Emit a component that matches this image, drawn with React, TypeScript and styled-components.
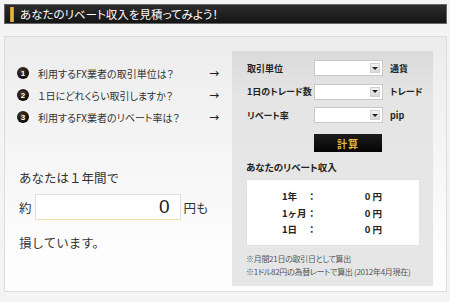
import React from "react";
import styled, { createGlobalStyle } from "styled-components";

const Global = createGlobalStyle`
  html, body { margin: 0; padding: 0; }
  body {
    background: #f4f4f4;
    font-family: "Noto Sans CJK JP", "Noto Sans", sans-serif;
    color: #222;
  }
`;

const Page = styled.div`
  width: 450px;
  height: 302px;
  padding: 4px 3px 0 4px;
  box-sizing: border-box;
`;

const Header = styled.div`
  height: 20px;
  display: flex;
  align-items: center;
  gap: 6px;
  padding-left: 5px;
  background: linear-gradient(#2c2c2c, #151515);
  border: 1px solid #666;
  box-sizing: border-box;
`;

const Stripe = styled.span`
  width: 4px;
  height: 15px;
  background: linear-gradient(90deg, #b88a1c, #f2c44a, #b88a1c);
`;

const Title = styled.h1`
  margin: 0;
  font-size: 11.5px;
  font-weight: normal;
  color: #fff;
  font-feature-settings: "palt";
`;

const Panel = styled.div`
  margin-top: 12px;
  height: 256px;
  border: 1px solid #dcdcdc;
  box-sizing: border-box;
  display: flex;
  background: linear-gradient(#ececec, #fdfdfd 85%);
`;

const Left = styled.div`
  width: 227px;
  box-sizing: border-box;
  padding: 25px 0 0 12px;
  display: flex;
  flex-direction: column;
`;

const Steps = styled.div`
  display: flex;
  flex-direction: column;
  width: 202px;
`;

const Step = styled.div`
  height: 22px;
  display: flex;
  align-items: center;
  font-size: 10px;
  color: #333;
  font-feature-settings: "palt";
`;

const Num = styled.span`
  width: 12px;
  height: 12px;
  border-radius: 50%;
  background: radial-gradient(circle at 40% 35%, #4a3a2a, #0d0905 70%);
  color: #fff;
  font-size: 8px;
  font-weight: bold;
  font-family: "Liberation Sans", sans-serif;
  display: flex;
  align-items: center;
  justify-content: center;
  margin-right: 9px;
  flex: none;
`;

const StepText = styled.span`
  flex: 1;
`;

const Arrow = styled.span`
  font-size: 12px;
  color: #222;
  font-family: "DejaVu Sans", sans-serif;
`;

const Result = styled.div`
  margin-top: 40px;
  display: flex;
  flex-direction: column;
  font-size: 12.5px;
  color: #333;
  padding-left: 2px;
`;

const Line = styled.div`
  height: 18px;
  display: flex;
  align-items: center;
`;

const AmountRow = styled.div`
  margin-top: 8px;
  display: flex;
  align-items: center;
  gap: 3px;
`;

const Amount = styled.div`
  width: 146px;
  height: 26px;
  box-sizing: border-box;
  background: #fff;
  border: 1px solid #dedede;
  border-bottom-color: #efe2b0;
  display: flex;
  align-items: center;
  justify-content: flex-end;
  padding-right: 10px;
  font-family: "Liberation Sans", sans-serif;
  font-size: 19px;
  color: #222;
`;

const LastLine = styled(Line)`
  margin-top: 13px;
`;

const Right = styled.div`
  margin: 14px 0 0 0;
  width: 201px;
  height: 235px;
  box-sizing: border-box;
  background: linear-gradient(#dadada, #e5e5e5 20%, #e6e6e6);
  padding: 9px 0 0 14px;
  display: flex;
  flex-direction: column;
`;

const Form = styled.div`
  display: grid;
  grid-template-columns: 62px 69px auto;
  grid-auto-rows: 16px;
  row-gap: 7.5px;
  column-gap: 6px;
  align-items: center;
`;

const Label = styled.span`
  font-size: 9px;
  font-weight: bold;
  color: #222;
  padding-left: 1px;
  white-space: nowrap;
  font-feature-settings: "palt";
`;

const Select = styled.div`
  height: 16px;
  box-sizing: border-box;
  background: #fff;
  border: 1px solid #c8c8c8;
  display: flex;
  justify-content: flex-end;
  align-items: center;
  padding-right: 2px;
`;

const Drop = styled.span`
  width: 10px;
  height: 10px;
  background: linear-gradient(#f4f4f4, #d8d8d8);
  border: 1px solid #d0d0d0;
  box-sizing: border-box;
  display: flex;
  align-items: center;
  justify-content: center;
  &::after {
    content: "";
    border-left: 3px solid transparent;
    border-right: 3px solid transparent;
    border-top: 3px solid #222;
  }
`;

const Button = styled.div`
  margin: 11px 0 0 68px;
  width: 68px;
  height: 18px;
  background: linear-gradient(#1c1c1c, #050505);
  color: #e6b83a;
  font-size: 10px;
  font-weight: bold;
  display: flex;
  align-items: center;
  justify-content: center;
  letter-spacing: 1px;
`;

const SubTitle = styled.div`
  margin-top: 9px;
  font-size: 9.5px;
  font-weight: bold;
  color: #222;
  height: 12px;
  line-height: 12px;
  font-feature-settings: "palt";
`;

const ResultBox = styled.div`
  margin-top: 6px;
  width: 174px;
  height: 67px;
  box-sizing: border-box;
  background: #fff;
  border: 1px solid #e2e2e2;
  padding: 8px 0 0 35px;
  display: flex;
  flex-direction: column;
`;

const ResultRow = styled.div`
  height: 16.5px;
  display: grid;
  grid-template-columns: 25px 20px 55px;
  align-items: center;
  font-size: 9.5px;
  font-weight: bold;
  color: #222;
`;

const Value = styled.span`
  text-align: right;
`;

const Notes = styled.div`
  margin-top: 6px;
  font-size: 8px;
  letter-spacing: -0.3px;
  color: #555;
  line-height: 13px;
  white-space: nowrap;
  font-feature-settings: "palt";
`;

const steps = [
  "利用するFX業者の取引単位は？",
  "１日にどれくらい取引しますか？",
  "利用するFX業者のリベート率は？",
];

const fields = [
  ["取引単位", "通貨"],
  ["1日のトレード数", "トレード"],
  ["リベート率", "pip"],
];

const results = [
  ["1年", "：", "0 円"],
  ["1ヶ月", "：", "0 円"],
  ["1日", "：", "0 円"],
];

export default function App() {
  return (
    <>
      <Global />
      <Page>
        <Header>
          <Stripe />
          <Title>あなたのリベート収入を見積ってみよう！</Title>
        </Header>
        <Panel>
          <Left>
            <Steps>
              {steps.map((s, i) => (
                <Step key={i}>
                  <Num>{i + 1}</Num>
                  <StepText>{s}</StepText>
                  <Arrow>→</Arrow>
                </Step>
              ))}
            </Steps>
            <Result>
              <Line>あなたは１年間で</Line>
              <AmountRow>
                <span>約</span>
                <Amount>0</Amount>
                <span>円も</span>
              </AmountRow>
              <LastLine>損しています。</LastLine>
            </Result>
          </Left>
          <Right>
            <Form>
              {fields.map(([l, u]) => (
                <React.Fragment key={l}>
                  <Label>{l}</Label>
                  <Select>
                    <Drop />
                  </Select>
                  <Label>{u}</Label>
                </React.Fragment>
              ))}
            </Form>
            <Button>計算</Button>
            <SubTitle>あなたのリベート収入</SubTitle>
            <ResultBox>
              {results.map(([a, b, c]) => (
                <ResultRow key={a}>
                  <span>{a}</span>
                  <span>{b}</span>
                  <Value>{c}</Value>
                </ResultRow>
              ))}
            </ResultBox>
            <Notes>
              ※月間21日の取引日として算出
              <br />
              ※1ドル82円の為替レートで算出 (2012年4月現在)
            </Notes>
          </Right>
        </Panel>
      </Page>
    </>
  );
}
